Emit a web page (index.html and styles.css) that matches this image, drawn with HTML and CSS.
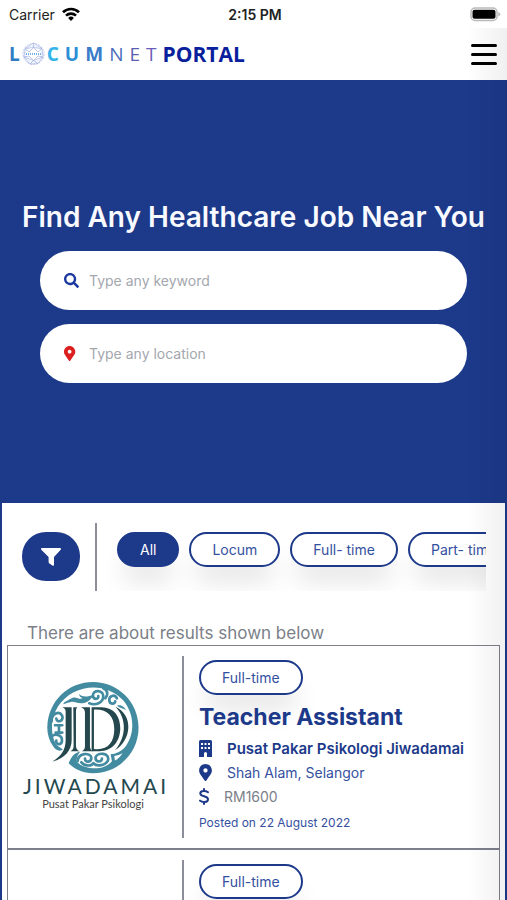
FILE: index.html
```html
<!DOCTYPE html>
<html lang="en">
<head>
  <meta charset="UTF-8">
  <meta name="viewport" content="width=device-width, initial-scale=1.0">
  <title>Locumnet Portal</title>
  <link rel="stylesheet" href="styles.css">
</head>
<body>
<div class="app">

  <!-- Status bar -->
  <div class="status-bar">
    <div class="carrier">
      <span>Carrier</span>
      <svg width="18" height="14" viewBox="0 0 18 14" fill="none" stroke="#000" stroke-width="2.6">
        <path d="M1 5.2A11.6 11.6 0 0 1 17 5.2"/>
        <path d="M4 8.6A7.2 7.2 0 0 1 14 8.6"/>
        <path d="M9 14L6.1 11A4.2 4.2 0 0 1 11.9 11Z" fill="#000" stroke="none"/>
      </svg>
    </div>
    <span class="time">2:15 PM</span>
    <svg class="battery" width="31" height="15" viewBox="0 0 31 15">
      <rect x="1" y="1" width="26" height="12.500" rx="4" fill="#fff" stroke="#b9b9b9" stroke-width="1.500"/>
      <rect x="2.500" y="2.800" width="23" height="9" rx="2" fill="#000"/>
      <path d="M28.300 5q2 .8 2 2.300t-2 2.300z" fill="#b9b9b9"/>
    </svg>
  </div>

  <!-- Header -->
  <header>
    <a href="#" class="brand">
      <span class="letter l">L</span>
      <svg class="globe" width="23" height="24" viewBox="0 0 23 24" fill="none" stroke="#a3b0e2" stroke-width="0.700">
        <circle cx="11.500" cy="12" r="10.500" stroke-dasharray="2 1"/>
        <circle cx="11.500" cy="12" r="8" stroke="#9cc5ef" stroke-dasharray="1 1"/>
        <path d="M11.500 1L3 6.500 2 15l6 7 8-.5 5-6.500-1-8.500zM3 6.500l8.500-1 8.500 1M2 15l9.500 3.500L21 15M8 22l3.500-3.500L16 21.500M3 6.500L7 10M20 6.500L16 10M2 15l5-1M21 15l-5-1M11.500 1v4.500L7 10M11.500 5.500L16 10M7 14l4.500 4.500L16 14"/>
        <path d="M4 12h15" stroke="#78aee6" stroke-width="2" stroke-dasharray="1 1"/>
      </svg>
      <span class="letter c">C</span>
      <span class="letter u">U</span>
      <span class="letter m">M</span>
      <span class="letter n">N</span>
      <span class="letter e">E</span>
      <span class="letter t">T</span>
      <span class="portal">PORTAL</span>
    </a>
    <button class="menu-button" aria-label="Menu">
      <span></span>
      <span></span>
      <span></span>
    </button>
  </header>

  <!-- Search Section -->
  <section class="hero">
    <h1>Find Any Healthcare Job Near You</h1>
    <form class="search-form">
      <label class="search-box">
        <svg width="15" height="15" viewBox="0 0 512 512" fill="#1c39a0"><path d="M505 442.700L405.300 343c-4.500-4.500-10.600-7-17-7H372c27.600-35.300 44-79.700 44-128C416 93.100 322.900 0 208 0S0 93.100 0 208s93.100 208 208 208c48.300 0 92.700-16.400 128-44v16.300c0 6.400 2.500 12.500 7 17l99.700 99.700c9.400 9.400 24.600 9.400 33.900 0l28.300-28.300c9.400-9.400 9.400-24.600.1-34zM208 336c-70.700 0-128-57.200-128-128 0-70.700 57.200-128 128-128 70.700 0 128 57.200 128 128 0 70.700-57.200 128-128 128z"/></svg>
        <input type="text" placeholder="Type any keyword" aria-label="Keyword">
      </label>
      <label class="search-box">
        <svg width="15" height="15" viewBox="0 0 448 512" preserveAspectRatio="xMinYMid meet" fill="#dc2020"><path d="M172.300 501.700C27 291 0 269.400 0 192 0 86 86 0 192 0s192 86 192 192c0 77.400-27 99-172.300 309.700-9.500 13.800-29.900 13.800-39.400 0zM192 256c35.300 0 64-28.700 64-64s-28.700-64-64-64-64 28.700-64 64 28.700 64 64 64z"/></svg>
        <input type="text" placeholder="Type any location" aria-label="Location">
      </label>
    </form>
  </section>

  <!-- Results Section -->
  <main>
    <div class="filters">
      <button class="filter-button" aria-label="Filter">
        <svg width="20" height="18" viewBox="0 0 20 18" fill="#fff"><path d="M1 0h18c1 0 1.300 1 .7 1.700L13 9v7.700c0 1-.8 1.400-1.600.9l-3-2.200c-.6-.4-.8-.8-.8-1.400V9L.3 1.700C-.3 1 0 0 1 0z"/></svg>
      </button>
      <div class="chips">
        <button class="chip active">All</button>
        <button class="chip">Locum</button>
        <button class="chip">Full- time</button>
        <button class="chip">Part- time</button>
      </div>
    </div>

    <p class="result-count">There are about results shown below</p>

    <!-- Job card -->
    <article class="job">
      <div class="job-logo">
        <svg viewBox="0 0 150 140" role="img" aria-label="Jiwadamai Pusat Pakar Psikologi">
          <g transform="translate(23 1) scale(0.333)">
            <!-- ring -->
            <g fill="#438ba0">
              <path fill-rule="evenodd" d="M60 215C50 222 38 217 31 206C18 188 12 166 13 146C16 68 77 12 150 12C226 12 287 73 287 149C287 226 226 286 150 286C121 286 96 275 77 256C84 240 92 225 112 221C104 230 99 243 102 252C116 267 139 272 163 271C181 270 197 262 207 250L203 229C218 229 235 220 246 208C277 168 276 108 240 66C202 26 142 17 92 43C53 64 30 101 27 139C26 165 31 190 43 203C47 208 55 210 60 215ZM214 234L216 248C226 243 234 234 239 225C231 230 223 233 214 234Z"/>
              <path d="M65 72C80 66 86 57 98 59C110 61 108 65 119 60C112 59 108 53 109 48C119 59 136 56 151 50C145 66 131 76 114 76C101 76 93 70 84 72C75 73 68 77 60 79Z"/>
              <path d="M222 83C234 78 245 87 250 97C240 90 232 91 222 83Z"/>
            </g>
            <!-- scrolls -->
            <g fill="none" stroke="#438ba0" stroke-width="8" stroke-linecap="round">
              <path d="M139 76C157 83 181 76 181 54C180 34 149 35 150 53C151 66 168 65 166 54"/>
              <path d="M181 31C197 38 195 53 187 61M222 61C215 47 198 54 199 67C200 79 216 80 217 70"/>
              <path d="M26 130C25 106 49 98 57 112C64 129 42 137 40 122M36 142H58M38 164H58M27 176C34 165 58 171 57 188C56 203 37 201 40 188M48 142V164"/>
              <path d="M104 250C105 225 142 222 145 239C146 253 126 256 126 242M151 256C143 268 121 262 115 253M151 256C163 268 188 262 195 248C202 224 163 222 158 238C156 253 177 255 177 242"/>
            </g>
            <!-- monogram -->
            <g fill="#24484e">
              <path d="M58 88H86V187C86 216 66 242 28 251C55 235 68 215 68 187V101C68 94 65 91 58 88Z"/>
              <path d="M91 88H103C99 92 99 97 99 104V202C99 212 102 217 109 220H82C90 217 92 212 92 202Z"/>
              <path d="M114 88H141V205C141 213 144 217 150 220H116C123 217 126 213 126 205V104C126 96 123 91 114 88Z"/>
              <path fill-rule="evenodd" d="M146 88H176C213 88 232 116 232 151C232 191 207 220 170 220H146ZM153 95V213C193 218 214 195 214 153C214 116 194 93 153 95Z"/>
              <path d="M218 86C271 111 268 184 216 217C250 178 253 124 218 86Z"/>
            </g>
          </g>
          <g text-anchor="middle">
            <text class="logo-name" x="76" y="117">JIWADAMAI</text>
            <text class="logo-tag" x="73" y="131">Pusat Pakar Psikologi</text>
          </g>
        </svg>
      </div>
      <div class="job-info">
        <span class="chip">Full-time</span>
        <h2>Teacher Assistant</h2>
        <ul>
          <li class="company">
            <svg width="13" height="17" viewBox="0 0 13 17"><path fill-rule="evenodd" d="M1.500 0h10Q13 0 13 1.500V17H8v-3.500Q8 12 6.500 12T5 13.500V17H0V1.500Q0 0 1.500 0zM2 3v2h2V3zm3.500 0v2h2V3zM9 3v2h2V3zM2 7v2h2V7zm3.500 0v2h2V7zM9 7v2h2V7z"/></svg>
            <span>Pusat Pakar Psikologi Jiwadamai</span>
          </li>
          <li>
            <svg width="13" height="17" viewBox="0 0 384 512"><path d="M172.300 501.700C27 291 0 269.400 0 192 0 86 86 0 192 0s192 86 192 192c0 77.400-27 99-172.300 309.700-9.500 13.800-29.900 13.800-39.400 0zM192 256c35.300 0 64-28.700 64-64s-28.700-64-64-64-64 28.700-64 64 28.700 64 64 64z"/></svg>
            <span>Shah Alam, Selangor</span>
          </li>
          <li class="salary">
            <svg width="10" height="17" viewBox="0 0 10 17" fill="none"><path fill="none" d="M5 1V3M5 14v2M9 4.200C7 2.800 1.300 2.200 1.300 5.500C1.300 9 9 7.500 9 11.200C9 14.800 3 14.500 1 12.600" stroke="#1c398a" stroke-width="2" stroke-linecap="round"/></svg>
            <span>RM1600</span>
          </li>
        </ul>
        <p class="posted">Posted on 22 August 2022</p>
      </div>
    </article>

    <article class="job">
      <div class="job-logo"></div>
      <div class="job-info">
        <span class="chip">Full-time</span>
      </div>
    </article>
  </main>

</div>
</body>
</html>
```

FILE: styles.css
```css
* {
  box-sizing: border-box;
}

body {
  margin: 0;
  font-family: Inter, "Liberation Sans", sans-serif;
  font-size: 14px;
  color: #1c398a;
  background-color: #fff;
}

h1, h2, p, ul {
  margin: 0;
  padding: 0;
}

button {
  font-family: inherit;
  cursor: pointer;
}

.app {
  position: relative;
  display: flex;
  flex-direction: column;
  height: 100vh;
  overflow: hidden;
}

.app::after {
  content: "";
  position: absolute;
  top: 28px;
  right: 0;
  bottom: 0;
  width: 40px;
  background: linear-gradient(to right, rgba(0, 0, 0, 0), rgba(0, 0, 0, 0.06));
  pointer-events: none;
}

.status-bar {
  flex: none;
  display: grid;
  grid-template-columns: 1fr auto 1fr;
  align-items: center;
  height: 28px;
  padding: 0 6px 0 9px;
  color: #222;
}

.carrier {
  display: flex;
  align-items: center;
  gap: 7px;
}

.time {
  font-weight: 600;
}

.battery {
  justify-self: end;
}

header {
  flex: none;
  display: flex;
  justify-content: space-between;
  align-items: center;
  height: 52px;
  padding: 0 10px 0 9px;
}

.brand {
  display: flex;
  align-items: center;
  gap: 6px;
  font-family: "Open Sans", "Noto Sans", sans-serif;
  font-size: 21px;
  line-height: 28px;
  text-decoration: none;
}

.letter {
  font-size: 19px;
  font-weight: 700;
}

.globe {
  margin: 0 -4px;
}

.l { color: #2f7cc4; }
.c { color: #35b4ea; }
.u { color: #2d8fd6; }
.m { color: #3a7cc9; }
.n { color: #4a6cbc; font-weight: 400; }
.e { color: #5a5fb4; font-weight: 400; }
.t { color: #6a5cb8; font-weight: 400; }

.portal {
  color: #0a1f9c;
  font-weight: 700;
}

.menu-button {
  display: flex;
  flex-direction: column;
  gap: 6px;
  padding: 0;
  border: none;
  background: none;
}

.menu-button span {
  width: 26px;
  height: 3px;
  border-radius: 2px;
  background-color: #000;
}

.hero {
  flex: none;
  height: 423px;
  padding: 119px 20px 0;
  background-color: #1c398a;
}

.hero h1 {
  display: flex;
  justify-content: center;
  color: #f8faff;
  font-size: 28px;
  font-weight: 600;
  line-height: 36px;
  white-space: nowrap;
}

.search-form {
  display: flex;
  flex-direction: column;
  gap: 14px;
  margin: 16px 20px 0;
}

.search-box {
  display: flex;
  align-items: center;
  gap: 10px;
  height: 59px;
  padding: 0 24px;
  border-radius: 30px;
  background-color: #fff;
}

.search-box input {
  flex: 1;
  min-width: 0;
  padding: 0;
  border: none;
  outline: none;
  background: none;
  font-family: inherit;
  font-size: 14px;
}

.search-box input::placeholder {
  color: #a4a7ae;
}

main {
  flex: 1 0 auto;
  padding: 20px 5px 0;
  border-left: 2px solid #1c398a;
  border-right: 2px solid #1c398a;
}

.filters {
  display: flex;
  margin: 0 14px 0 15px;
}

.filter-button {
  display: flex;
  flex: none;
  justify-content: center;
  align-items: center;
  width: 58px;
  height: 49px;
  margin: 9px 15px 10px 0;
  border: none;
  border-radius: 24px;
  background-color: #1c398a;
}

.chips {
  display: flex;
  flex: 1;
  gap: 10px;
  padding: 9px 0 0 20px;
  border-left: 2px solid #8b8d99;
  overflow: hidden;
}

.chip {
  display: inline-block;
  flex: none;
  height: 35px;
  padding: 0 21px;
  border: 2px solid #1c398a;
  border-radius: 18px;
  background-color: #fff;
  color: #3450a0;
  font-size: 14px;
  line-height: 31px;
  white-space: nowrap;
  box-shadow: 0 20px 25px -5px rgba(0, 0, 0, 0.1);
}

.chip.active {
  background-color: #1c398a;
  color: #fff;
}

.result-count {
  margin: 30px 20px 0;
  color: #7b7f88;
  font-size: 17px;
  line-height: 24px;
}

.job {
  display: flex;
  height: 204px;
  padding: 10px 12px;
  border: 1px solid #7d7f8b;
}

.job-logo {
  display: flex;
  flex: none;
  align-items: center;
  width: 162px;
}

.job-logo svg {
  width: 150px;
  height: 140px;
}

.logo-name {
  font-family: Lato, sans-serif;
  font-size: 21px;
  letter-spacing: 3px;
  fill: #24484e;
}

.logo-tag {
  font-family: Lato, sans-serif;
  font-size: 11px;
  fill: #444;
}

.job-info {
  flex: 1;
  padding: 4px 0 0 15px;
  border-left: 2px solid #8b8d99;
}

.job h2 {
  margin-top: 6px;
  font-size: 23px;
  font-weight: 700;
  line-height: 32px;
}

.job ul {
  margin-top: 3px;
  list-style: none;
}

.job li {
  display: flex;
  align-items: center;
  gap: 15px;
  height: 24px;
  color: #3450a0;
}

.job li svg {
  fill: #1c398a;
}

.job .company {
  color: #1c398a;
  font-size: 15px;
  font-weight: 600;
}

.job .salary {
  color: #7b7f88;
}

.posted {
  margin-top: 7px;
  color: #3450a0;
  font-size: 12px;
  line-height: 16px;
}
```
